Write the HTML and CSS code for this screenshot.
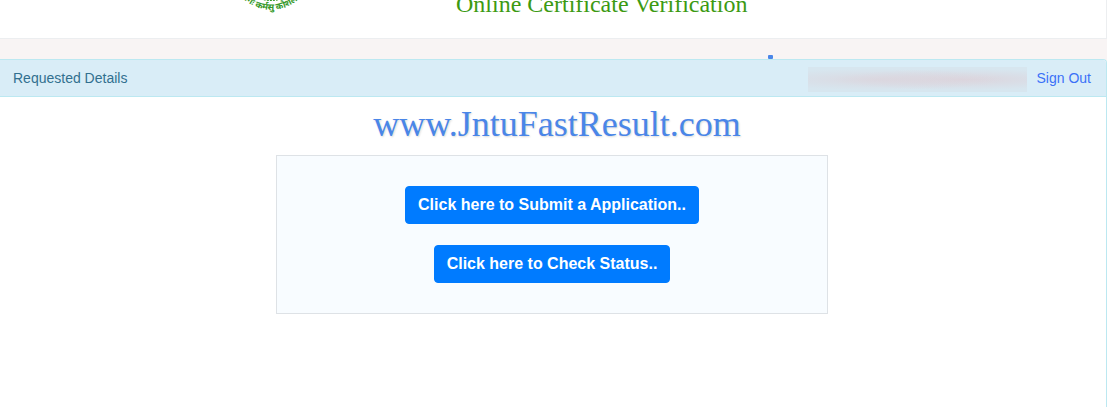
FILE: index.html
```html
<!DOCTYPE html>
<html lang="en">
<head>
  <meta charset="UTF-8">
  <meta name="viewport" content="width=device-width, initial-scale=1">
  <title>Online Certificate Verification</title>
  <link rel="stylesheet" href="styles.css">
</head>
<body>

<header class="header">
  <svg class="seal" width="72" height="72" viewBox="0 0 72 72" role="img" aria-label="University seal">
    <defs>
      <path id="motto" d="M -4 32 A 40 40 0 0 0 76 32"/>
    </defs>
    <text class="motto" text-anchor="middle" lang="sa"><textPath href="#motto" startOffset="50%">योगः कर्मसु कौशलम्</textPath></text>
    <path d="M26 60 q10 3 20 0" fill="none" stroke="#36992a" stroke-width="3" stroke-dasharray="2 1"/>
  </svg>
  <h1 class="title">Online Certificate Verification</h1>
</header>

<div class="strip"><span class="dot"></span></div>

<main class="panel">
  <div class="panel-heading">
    <span>Requested Details</span>
    <div class="account">
      <span class="user"></span>
      <a class="signout" href="#">Sign Out</a>
    </div>
  </div>
  <div class="panel-body">
    <h2 class="site">www.JntuFastResult.com</h2>
    <div class="box">
      <button type="button" class="btn">Click here to Submit a Application..</button>
      <button type="button" class="btn">Click here to Check Status..</button>
    </div>
  </div>
</main>

</body>
</html>
```
FILE: styles.css
```css
* {
  box-sizing: border-box;
}

html, body {
  margin: 0;
  padding: 0;
  height: 100%;
}

body {
  display: flex;
  flex-direction: column;
  background-color: #f8f4f4;
  font-family: "Liberation Sans", Arial, sans-serif;
  font-size: 14px;
  overflow: hidden;
}

/* header is scrolled partly out of view */
.header {
  display: grid;
  grid-template-columns: 1fr 292px 1fr;
  grid-template-rows: 100%;
  align-items: end;
  flex: none;
  height: 39px;
  padding: 0 0 20px 98px;
  background-color: #fff;
  border-bottom: 1px solid #eceef0;
  border-right: 1px solid #eceef0;
  overflow: hidden;
}

.seal {
  justify-self: center;
  margin: 0 12px 8px 0;
  overflow: visible;
}

.motto {
  font-family: "Noto Sans Devanagari", "Noto Sans", sans-serif;
  font-size: 9px;
  font-weight: bold;
  fill: #36992a;
}

.title {
  margin: 0;
  font-family: "Liberation Serif", "Times New Roman", serif;
  font-size: 24px;
  font-weight: normal;
  line-height: 28px;
  white-space: nowrap;
  color: #3c9a12;
}

.strip {
  position: relative;
  flex: none;
  height: 20px;
}

.dot {
  position: absolute;
  left: 768px;
  bottom: 0;
  width: 5px;
  height: 4px;
  border-radius: 1px;
  background-color: #4a86e8;
}

.panel {
  flex: 1;
  background-color: #fff;
  border: 1px solid #bce8f1;
  border-width: 1px 1px 0 0;
  border-radius: 0 4px 0 0;
}

.panel-heading {
  display: flex;
  align-items: center;
  justify-content: space-between;
  height: 37px;
  padding: 0 15px 0 13px;
  color: #31708f;
  background-color: #d9edf7;
  border-bottom: 1px solid #bce8f1;
  border-radius: 0 3px 0 0;
}

.account {
  display: flex;
  align-items: center;
  gap: 10px;
}

.user {
  width: 219px;
  height: 25px;
  margin-top: 2px;
  background:
    radial-gradient(ellipse at 32% 50%, rgba(220, 211, 219, 0.7), rgba(220, 211, 219, 0) 60%),
    radial-gradient(ellipse at 70% 50%, rgba(221, 209, 217, 0.8), rgba(221, 209, 217, 0) 60%),
    #d7e6ef;
}

.signout {
  color: #3b71f7;
  text-decoration: none;
}

.panel-body {
  display: flex;
  flex-direction: column;
  align-items: center;
  padding: 7px 2px 0 0;
}

.site {
  margin: 0 0 11px 10px;
  font-family: "Liberation Serif", "Times New Roman", serif;
  font-size: 36px;
  font-weight: normal;
  line-height: 40px;
  color: #4a86e8;
  text-shadow: 1px 1px 2px rgba(0, 0, 0, 0.15);
}

.box {
  display: flex;
  flex-direction: column;
  align-items: center;
  gap: 21px;
  width: 50%;
  min-width: 320px;
  padding: 30px 0;
  background-color: #f8fcff;
  border: 1px solid #dee2e6;
}

.btn {
  padding: 6px 12px;
  font-family: inherit;
  font-size: 16px;
  font-weight: bold;
  line-height: 24px;
  color: #fff;
  background-color: #007bff;
  border: 1px solid #007bff;
  border-radius: 4px;
  cursor: pointer;
}

.btn:hover {
  background-color: #0069d9;
}
```
